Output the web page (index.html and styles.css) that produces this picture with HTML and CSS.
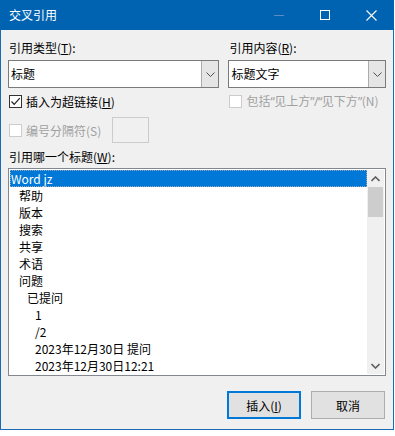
FILE: index.html
```html
<!DOCTYPE html>
<html>
<head>
<meta charset="utf-8">
<link rel="stylesheet" href="styles.css">
</head>
<body>
<div class="window">
  <div class="titlebar">
    <span class="title">交叉引用</span>
    <div class="controls">
      <span class="ctl min"><svg width="10" height="10" viewBox="0 0 10 10"><path d="M0 5.5h10" stroke="#5b8fc4" stroke-width="1"/></svg></span>
      <span class="ctl max"><svg width="10" height="10" viewBox="0 0 10 10"><rect x="0.5" y="0.5" width="9" height="9" fill="none" stroke="#fff" stroke-width="1"/></svg></span>
      <span class="ctl close"><svg width="11" height="11" viewBox="0 0 11 11"><path d="M0.5 0.5L10.5 10.5M10.5 0.5L0.5 10.5" stroke="#fff" stroke-width="1.1"/></svg></span>
    </div>
  </div>
  <div class="content">
    <div class="top-row">
      <div class="col left-col">
        <div class="label">引用类型(<u>T</u>):</div>
        <div class="combo">
          <div class="field">标题</div>
          <div class="drop"><svg width="9" height="5" viewBox="0 0 9 5"><path d="M0.5 0.5L4.5 4.5L8.5 0.5" fill="none" stroke="#505050" stroke-width="1"/></svg></div>
        </div>
        <div class="check-row">
          <span class="box checked"><svg width="11" height="11" viewBox="0 0 11 11"><path d="M1.5 5.5L4.2 8.3L9.8 2.2" fill="none" stroke="#202020" stroke-width="1.2"/></svg></span>
          <span>插入为超链接(<u>H</u>)</span>
        </div>
      </div>
      <div class="col right-col">
        <div class="label">引用内容(<u>R</u>):</div>
        <div class="combo">
          <div class="field">标题文字</div>
          <div class="drop"><svg width="9" height="5" viewBox="0 0 9 5"><path d="M0.5 0.5L4.5 4.5L8.5 0.5" fill="none" stroke="#505050" stroke-width="1"/></svg></div>
        </div>
        <div class="check-row disabled">
          <span class="box"></span>
          <span class="nowrap">包括<span class="q">“</span>见上方<span class="q">”/“</span>见下方<span class="q">”</span>(N)</span>
        </div>
      </div>
    </div>
    <div class="sep-row disabled">
      <span class="box"></span>
      <span class="sep-label">编号分隔符(S)</span>
      <span class="sep-input"></span>
    </div>
    <div class="label list-label">引用哪一个标题(<u>W</u>):</div>
    <div class="listbox">
      <div class="items">
        <div class="item selected">Word jz</div>
        <div class="item l1">帮助</div>
        <div class="item l1">版本</div>
        <div class="item l1">搜索</div>
        <div class="item l1">共享</div>
        <div class="item l1">术语</div>
        <div class="item l1">问题</div>
        <div class="item l2">已提问</div>
        <div class="item l3">1</div>
        <div class="item l3">/2</div>
        <div class="item l3">2023年12月30日 提问</div>
        <div class="item l3">2023年12月30日12:21</div>
      </div>
      <div class="scrollbar">
        <div class="arrow"><svg width="9" height="6" viewBox="0 0 9 6"><path d="M0.5 5L4.5 1L8.5 5" fill="none" stroke="#606060" stroke-width="1.6"/></svg></div>
        <div class="thumb"></div>
        <div class="track"></div>
        <div class="arrow"><svg width="9" height="6" viewBox="0 0 9 6"><path d="M0.5 1L4.5 5L8.5 1" fill="none" stroke="#606060" stroke-width="1.6"/></svg></div>
      </div>
    </div>
    <div class="buttons">
      <div class="btn default">插入(<u>I</u>)</div>
      <div class="btn">取消</div>
    </div>
  </div>
</div>
</body>
</html>
```
FILE: styles.css
```css
* { box-sizing: border-box; }
body {
  margin: 0;
  background: #ffffff;
  font-family: "Noto Sans CJK SC", "Noto Sans", sans-serif;
  font-size: 12px;
  color: #000;
}
u { text-decoration: underline; text-underline-offset: 1px; }
.window {
  width: 394px;
  height: 430px;
  background: #f0f0f0;
  border: 1px solid #1a6bb5;
  border-top: none;
  display: flex;
  flex-direction: column;
}
.titlebar {
  height: 30px;
  background: #0063b1;
  margin: 0 -1px;
  display: flex;
  align-items: center;
  justify-content: space-between;
  color: #fff;
}
.title {
  padding-left: 9px;
  font-size: 12px;
  line-height: 16px;
}
.controls { display: flex; height: 30px; }
.ctl {
  width: 46px;
  height: 30px;
  display: flex;
  align-items: center;
  justify-content: center;
}
.ctl svg { display: block; }
.content {
  padding: 9px 7px 0 7px;
  display: flex;
  flex-direction: column;
}
.top-row { display: flex; gap: 9px; }
.left-col { width: 212px; }
.right-col { width: 158px; }
.label { height: 17px; line-height: 17px; padding-left: 1px; }
.combo {
  margin-top: 4px;
  height: 28px;
  display: flex;
  background: #fff;
  border: 1px solid #7a7a7a;
}
.field {
  flex: 1;
  line-height: 26px;
  padding-left: 2px;
}
.drop {
  width: 17px;
  background: #e5e5e5;
  border-left: 1px solid #acacac;
  display: flex;
  align-items: center;
  justify-content: center;
}
.drop svg { display: block; }
.check-row {
  margin-top: 5px;
  height: 16px;
  display: flex;
  align-items: center;
  gap: 4px;
  padding-left: 1px;
}
.nowrap { white-space: nowrap; }
.q { font-family: "Noto Sans", sans-serif; letter-spacing: -0.5px; }
.box {
  width: 13px;
  height: 13px;
  flex: none;
  border: 1px solid #cccccc;
  background: #fff;
  display: flex;
  align-items: center;
  justify-content: center;
}
.box.checked { border-color: #333; }
.box svg { display: block; }
.disabled { color: #a0a0a0; }
.sep-row {
  margin-top: 8px;
  height: 26px;
  display: flex;
  align-items: center;
  padding-left: 1px;
}
.sep-row .box { margin-right: 4px; }
.sep-label { width: 86px; }
.sep-input {
  width: 37px;
  height: 26px;
  border: 1px solid #cccccc;
  background: #f0f0f0;
}
.list-label { margin-top: 5px; }
.listbox {
  margin-top: 3px;
  height: 208px;
  border: 1px solid #828790;
  background: #fff;
  display: flex;
  padding: 1px;
}
.items { flex: 1; }
.item {
  height: 17px;
  line-height: 17px;
  padding-left: 1px;
  white-space: nowrap;
}
.item.selected {
  background: #0078d7;
  color: #fff;
  outline: 1px dotted #9ab;
  outline-offset: -1px;
}
.item.l1 { padding-left: 9px; }
.item.l2 { padding-left: 17px; }
.item.l3 { padding-left: 25px; }
.scrollbar {
  width: 17px;
  background: #f0f0f0;
  display: flex;
  flex-direction: column;
}
.arrow {
  height: 17px;
  display: flex;
  align-items: center;
  justify-content: center;
}
.arrow svg { display: block; }
.thumb {
  height: 30px;
  margin: 0 1px;
  background: #cdcdcd;
}
.track { flex: 1; }
.buttons {
  margin-top: 15px;
  display: flex;
  justify-content: flex-end;
  gap: 10px;
  padding-right: 1px;
}
.btn {
  width: 74px;
  height: 28px;
  background: #e1e1e1;
  border: 1px solid #adadad;
  display: flex;
  align-items: center;
  justify-content: center;
}
.btn.default { border: 2px solid #0078d7; }
```
